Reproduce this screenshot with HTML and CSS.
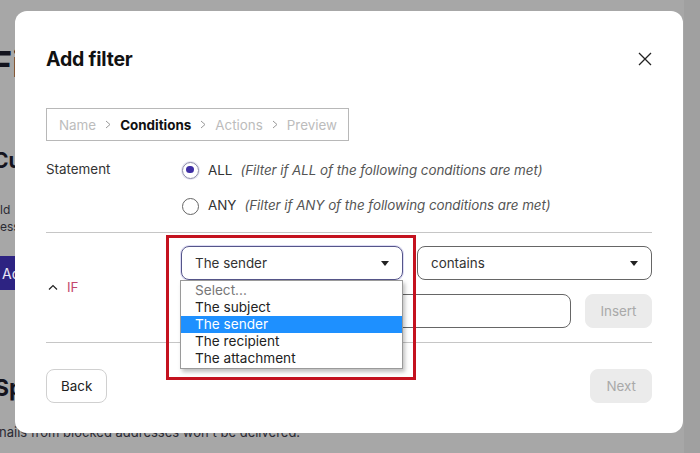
FILE: index.html
```html
<!DOCTYPE html>
<html lang="en">
<head>
<meta charset="utf-8">
<title>Add filter</title>
<link rel="stylesheet" href="styles.css">
</head>
<body>
<div class="page">
  <h1 class="page-title">Filters</h1>
  <h2 class="section-title custom">Custom filters</h2>
  <p class="page-text">ld&nbsp;&nbsp; custom filters to organize your messages<br>ess them automatically.</p>
  <button class="page-btn">Add filter</button>
  <h2 class="section-title spam">Spam, block, and allow lists</h2>
  <p class="page-text bottom">nails from blocked addresses won't be delivered.</p>
</div>
<div class="scrollbar"></div>

<div class="modal">
  <div class="modal-head">
    <h2 class="modal-title">Add filter</h2>
    <button class="close" aria-label="Close">
      <svg width="14" height="14" viewBox="0 0 14 14"><path d="M1 1 L13 13 M13 1 L1 13" stroke="#222" stroke-width="1.3" fill="none"/></svg>
    </button>
  </div>

  <div class="crumbs">
    <span class="crumb">Name</span>
    <svg class="sep" width="6" height="9" viewBox="0 0 6 9"><path d="M1 1 L5 4.5 L1 8" stroke="#999" stroke-width="1" fill="none"/></svg>
    <span class="crumb active">Conditions</span>
    <svg class="sep" width="6" height="9" viewBox="0 0 6 9"><path d="M1 1 L5 4.5 L1 8" stroke="#999" stroke-width="1" fill="none"/></svg>
    <span class="crumb">Actions</span>
    <svg class="sep" width="6" height="9" viewBox="0 0 6 9"><path d="M1 1 L5 4.5 L1 8" stroke="#999" stroke-width="1" fill="none"/></svg>
    <span class="crumb">Preview</span>
  </div>

  <div class="statement">
    <div class="label">Statement</div>
    <div class="options">
      <label class="option"><span class="radio checked"></span><span class="opt-name">ALL</span><em class="opt-desc">(Filter if ALL of the following conditions are met)</em></label>
      <label class="option"><span class="radio"></span><span class="opt-name">ANY</span><em class="opt-desc">(Filter if ANY of the following conditions are met)</em></label>
    </div>
  </div>

  <div class="conditions">
    <div class="if-label">
      <svg width="10" height="6" viewBox="0 0 10 6"><path d="M1 5.5 L5 1.5 L9 5.5" stroke="#222" stroke-width="1.2" fill="none"/></svg>
      <span class="if-text">IF</span>
    </div>
    <div class="cond-fields">
      <div class="row">
        <div class="select-wrap">
          <div class="select focused"><span>The sender</span><span class="caret"></span></div>
          <ul class="listbox">
            <li class="placeholder">Select...</li>
            <li>The subject</li>
            <li class="selected">The sender</li>
            <li>The recipient</li>
            <li>The attachment</li>
          </ul>
          <div class="highlight"></div>
        </div>
        <div class="select wide"><span>contains</span><span class="caret"></span></div>
      </div>
      <div class="row">
        <div class="input"></div>
        <button class="btn disabled insert">Insert</button>
      </div>
    </div>
  </div>

  <div class="footer">
    <button class="btn back">Back</button>
    <button class="btn disabled">Next</button>
  </div>
</div>
</body>
</html>
```
FILE: styles.css
```css
* { box-sizing: border-box; }
html, body { margin: 0; padding: 0; }
body {
  width: 700px;
  height: 453px;
  overflow: hidden;
  background: #a7a7a7;
  font-family: Inter, "Noto Sans", sans-serif;
  color: #222;
  position: relative;
}

/* Background page (dimmed) */
.page {
  padding-top: 42px;
  display: flex;
  flex-direction: column;
  align-items: flex-start;
  color: #14141e;
}
.page-title {
  margin: 0 0 0 -9px;
  font-size: 36px;
  line-height: 44px;
  font-weight: 700;
  white-space: nowrap;
}
.section-title {
  margin: 62px 0 0;
  font-size: 21px;
  line-height: 26px;
  font-weight: 700;
  white-space: nowrap;
}
.section-title.custom { margin-left: -7px; }
.section-title.spam {
  margin-top: 84px;
  margin-left: -6px;
  font-size: 23px;
  line-height: 28px;
}
.page-text {
  margin: 27px 0 0;
  font-size: 12px;
  line-height: 17px;
  color: #2a2a33;
  white-space: nowrap;
}
.page-text.bottom {
  margin-top: 21px;
  font-size: 13px;
  line-height: 18px;
  margin-left: -1px;
}
.page-btn {
  margin: 21px 0 0 0;
  height: 34px;
  padding: 0 16px 0 2px;
  border: none;
  background: #2d2382;
  color: #e8e6f5;
  font-family: inherit;
  font-size: 14px;
  border-radius: 0 6px 6px 0;
}
.scrollbar {
  position: absolute;
  top: 0;
  right: 0;
  width: 16px;
  height: 453px;
  background: #a0a0a0;
}

/* Modal */
.modal {
  position: absolute;
  left: 15px;
  top: 11px;
  width: 668px;
  height: 422px;
  background: #fff;
  border-radius: 12px;
  padding: 36px 31px 30px;
  display: flex;
  flex-direction: column;
  align-items: stretch;
  font-size: 13.4px;
}
.modal-head {
  display: flex;
  justify-content: space-between;
  align-items: center;
}
.modal-title {
  margin: 0;
  font-size: 19.5px;
  line-height: 24px;
  font-weight: 700;
  color: #111;
  letter-spacing: -0.2px;
}
.close {
  width: 14px;
  height: 14px;
  padding: 0;
  border: none;
  background: none;
  display: flex;
}

.crumbs {
  margin-top: 37px;
  align-self: flex-start;
  height: 33px;
  border: 1px solid #b8b8b8;
  display: flex;
  align-items: center;
  gap: 9px;
  padding: 0 11px 0 12px;
}
.crumb { color: #bcbcbc; }
.crumb.active { color: #111; font-weight: 700; }

.statement {
  margin-top: 19px;
  display: grid;
  grid-template-columns: 135px 1fr;
}
.label {
  line-height: 20px;
  color: #333;
  margin-top: -1px;
}
.options {
  display: flex;
  flex-direction: column;
  gap: 15px;
}
.option {
  display: flex;
  align-items: center;
  height: 20px;
  color: #333;
}
.radio {
  width: 17px;
  height: 17px;
  border-radius: 50%;
  border: 1px solid #666;
  margin-right: 9px;
  margin-left: 1px;
  position: relative;
  flex: none;
}
.option:last-child .radio { margin-top: 2px; }
.radio.checked {
  border: 1.5px solid #8a8aa6;
  box-shadow: 0 0 0 1px #e6e4f4;
}
.radio.checked::after {
  content: "";
  position: absolute;
  left: 3.25px;
  top: 3.25px;
  width: 7.5px;
  height: 7.5px;
  border-radius: 50%;
  background: #3f2fa6;
}
.opt-name { margin-right: 8px; }
.opt-desc { color: #555; font-style: italic; letter-spacing: -0.05px; }

.conditions {
  margin-top: 17px;
  border-top: 1px solid #c6c6c6;
  border-bottom: 1px solid #c6c6c6;
  padding: 13px 0 14px;
  display: grid;
  grid-template-columns: 135px 1fr;
  align-items: center;
}
.if-label {
  display: flex;
  align-items: center;
  gap: 9px;
  padding-left: 2px;
}
.if-text { color: #c4476e; }
.cond-fields {
  display: flex;
  flex-direction: column;
  gap: 14px;
}
.row {
  display: flex;
  gap: 14px;
}
.select-wrap {
  position: relative;
  width: 222px;
  flex: none;
}
.select {
  height: 34px;
  border: 1px solid #666;
  border-radius: 8px;
  display: flex;
  align-items: center;
  justify-content: space-between;
  padding: 0 13px 0 13px;
  color: #333;
}
.select.focused {
  border-color: #55558a;
  box-shadow: 0 0 0 1px rgba(120, 110, 210, 0.25);
}
.select.wide { flex: 1; }
.caret {
  width: 0;
  height: 0;
  border-left: 4.5px solid transparent;
  border-right: 4.5px solid transparent;
  border-top: 5px solid #222;
}
.listbox {
  position: absolute;
  left: -1px;
  top: 34px;
  width: 223px;
  margin: 0;
  padding: 1px 0;
  list-style: none;
  background: #fff;
  border: 1px solid #9a9a9a;
  box-shadow: 2px 3px 4px rgba(0, 0, 0, 0.25);
  font-size: 13.6px;
  line-height: 17px;
  z-index: 2;
}
.listbox li {
  padding-left: 14px;
  color: #222;
}
.listbox li.placeholder { color: #777; }
.listbox li.selected { background: #1e90ff; color: #fff; }
.highlight {
  position: absolute;
  left: -15px;
  top: -11px;
  width: 250px;
  height: 145px;
  border: 3px solid #c4121f;
  z-index: 3;
  pointer-events: none;
}
.input {
  flex: 1;
  height: 34px;
  border: 1px solid #666;
  border-radius: 8px;
}
.btn {
  height: 34px;
  border-radius: 8px;
  font-family: inherit;
  font-size: 13.4px;
  padding: 0 15px;
  border: 1px solid #d0d0d0;
  background: #fff;
  color: #222;
}
.btn.back { padding: 0 14px; }
.btn.disabled {
  background: #ebebeb;
  border-color: #ebebeb;
  color: #a9a9a9;
}
.btn.insert { width: 67px; padding: 0; }
.footer {
  margin-top: 26px;
  display: flex;
  justify-content: space-between;
}
```
